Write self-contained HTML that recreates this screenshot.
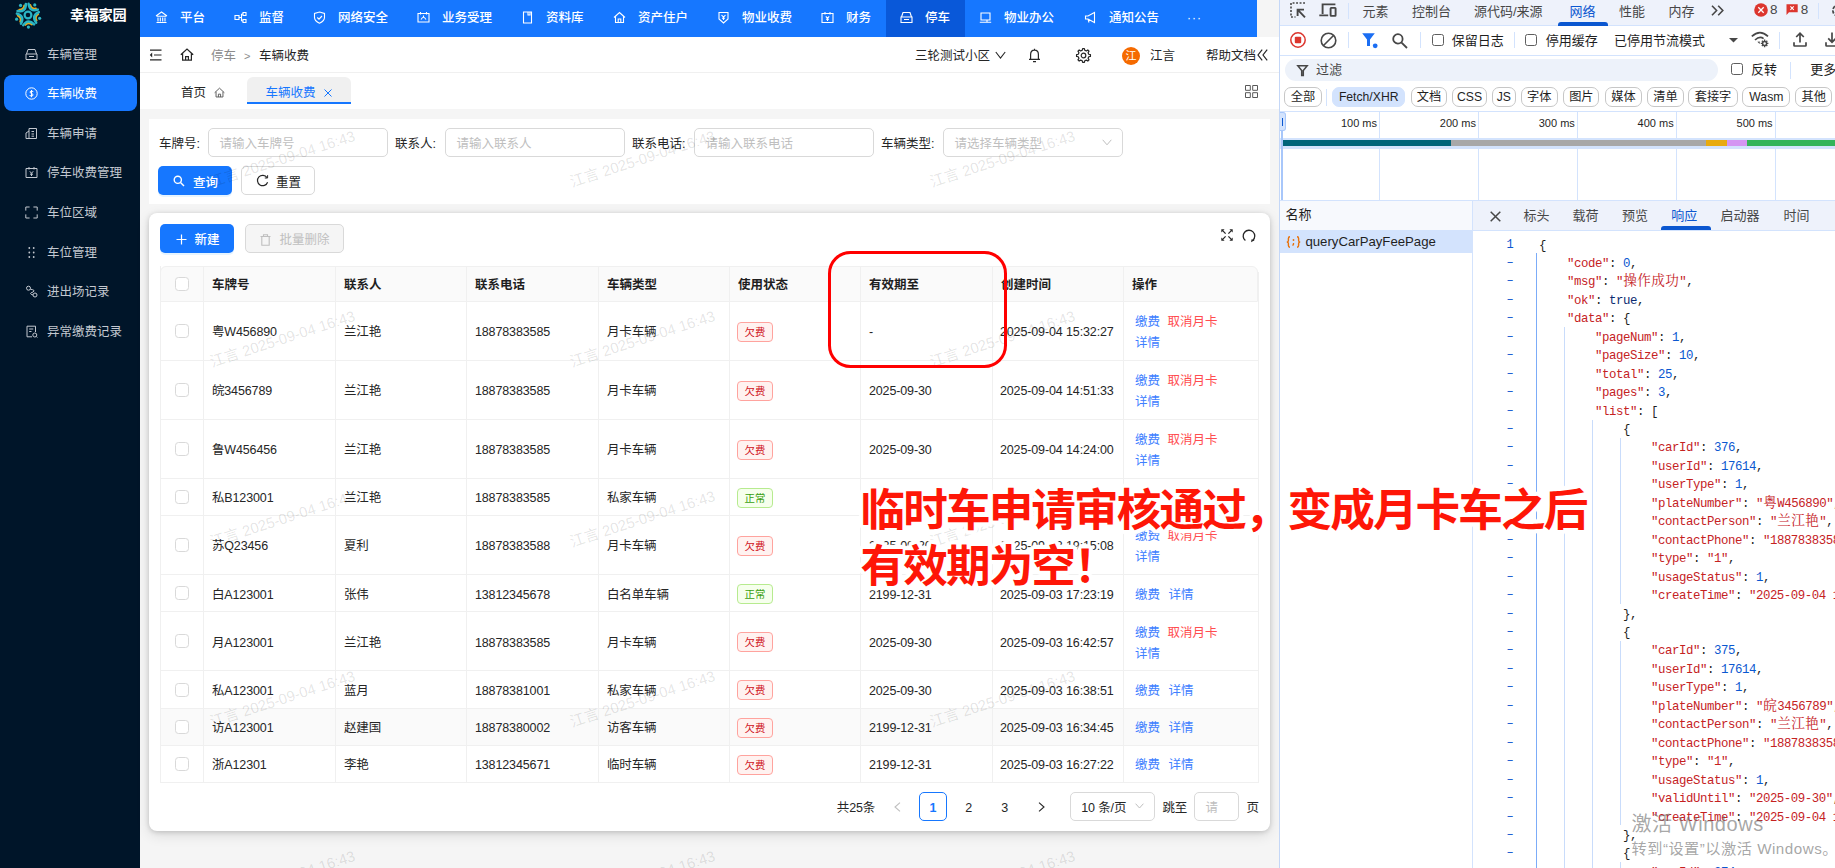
<!DOCTYPE html>
<html lang="zh-CN"><head><meta charset="utf-8"><title>车辆收费</title>
<style>
*{box-sizing:border-box;margin:0;padding:0}
html,body{width:1835px;height:868px;overflow:hidden;background:#fff}
body{font-family:"Liberation Sans","Noto Sans CJK SC",sans-serif;font-size:12.5px;color:#262626;position:relative}
.abs{position:absolute}
.t{position:absolute;white-space:nowrap;line-height:1}
svg{display:block;position:absolute;overflow:visible}
#side{position:absolute;left:0;top:0;width:140px;height:868px;background:#001529}
#side .mi{position:absolute;left:47px;color:#d4d9df;font-size:12.5px;line-height:16px;height:16px;white-space:nowrap}
#side .act{position:absolute;left:4px;top:75px;width:133px;height:36px;border-radius:8px;background:#1677ff}
#topnav{position:absolute;left:140px;top:0;width:1117px;height:37px;background:#1677ff}
#topnav .n{position:absolute;top:0;height:37px;line-height:36px;color:#fff;font-size:12.5px;font-weight:500;white-space:nowrap}
#topgap{position:absolute;left:1257px;top:0;width:23px;height:37px;background:#f5f5f5}
#hdr{position:absolute;left:140px;top:37px;width:1140px;height:35.6px;background:#fff}
#tabs{position:absolute;left:140px;top:72px;width:1140px;height:37px;background:#fff}
#content{position:absolute;left:140px;top:109px;width:1140px;height:759px;background:#f5f5f5}

.card{position:absolute;background:#fff}
.lbl{position:absolute;line-height:16px;top:136px;color:#262626;white-space:nowrap}
.inp{position:absolute;top:128px;height:28.5px;width:179.5px;border:1px solid #d9d9d9;border-radius:5px;background:#fff;color:#bfbfbf;line-height:31.5px;padding-left:10.5px;white-space:nowrap}
.btn{position:absolute;height:29px;border-radius:5px;line-height:28px;white-space:nowrap}
.tbl{position:absolute;left:160px;top:266.5px;width:1098px;border:1px solid #f0f0f0;border-radius:6px 6px 0 0}
.row{position:absolute;left:160.5px;width:1097.5px;border-bottom:1px solid #f0f0f0}
.vl{position:absolute;top:266px;width:1px;background:#f0f0f0}
.c{position:absolute;white-space:nowrap;line-height:16px;color:#262626;letter-spacing:-0.12px}
.th{position:absolute;white-space:nowrap;line-height:16px;color:#1f1f1f;font-weight:700;top:277px}
.cb{position:absolute;left:175px;width:14px;height:14px;border:1px solid #d9d9d9;border-radius:3.5px;background:#fff}
.tag{position:absolute;left:737px;height:20px;width:36px;border-radius:4px;font-size:10.4px;line-height:19.6px;text-align:center}
.tag.r{background:#fff2f0;border:1px solid #ffa39e;color:#cf1322}
.tag.g{background:#f6ffed;border:1px solid #b7eb8f;color:#389e0d}
.lk{position:absolute;white-space:nowrap;line-height:16px;color:#4080ff}
.lk.d{color:#ff4d4f}
.wm{position:absolute;white-space:nowrap;font-size:14.9px;line-height:16px;color:rgba(0,0,0,.115);transform:rotate(-18deg);transform-origin:0 100%}

#dt{position:absolute;left:1280px;top:0;width:555px;height:868px;background:#fff;overflow:hidden;font-size:13px;color:#1f1f1f}
#dt .t{font-size:13px;line-height:16px}
#dt .tab{color:#474747}
.pill{position:absolute;top:87px;height:20px;border:1px solid #c7c7c7;border-radius:7px;line-height:18px;text-align:center;font-size:12.2px;white-space:nowrap;color:#1f1f1f}
.hl{position:absolute;left:0;width:555px;height:1px;background:#d3e3fd}
.gl{position:absolute;top:111px;width:1px;height:89px;background:#d3e3fd}
.ms{position:absolute;top:116px;font-size:11px;line-height:14px;white-space:nowrap;text-align:right;width:60px;color:#1f1f1f}
.sep{position:absolute;width:1px;background:#d3e3fd}
.ck{position:absolute;width:12px;height:12px;border:1.3px solid #5e5e5e;border-radius:2.5px;background:#fff}
.code{position:absolute;left:259px;white-space:pre;font-family:"Liberation Mono","Noto Serif CJK SC",monospace;font-size:12.4px;letter-spacing:-0.44px;line-height:18px;height:18px;color:#1f1f1f}
.code b{font-weight:400;color:#c5221f}
.code i{font-style:normal;color:#0b57d0}
.code u{text-decoration:none;color:#0b2a70}
.code s{text-decoration:none;font-size:13.6px;letter-spacing:0.4px;line-height:14px;margin-left:.4px}
.ln{position:absolute;left:226px;width:8px;text-align:center;font-family:"Liberation Mono",monospace;font-size:12px;line-height:18px;height:18px;color:#0b57d0}
.ig{position:absolute;width:1px;background:#7cacf8}
</style></head><body>
<div id="side">
<svg style="left:14.5px;top:1.8px" width="26" height="26" viewBox="-13 -13 26 26"><circle cx="0" cy="0" r="3.4" fill="none" stroke="#2ab5c4" stroke-width="2.2"/><g fill="none" stroke-linecap="round"><path d="M3.99 9.39 Q0.46 6.58 -2.64 9.85" stroke="#e8a91c" stroke-width="2"/><path d="M-7.70 6.69 Q-6.12 2.47 -10.19 0.53" stroke="#e8a91c" stroke-width="2"/><path d="M-8.74 -5.25 Q-4.24 -5.06 -3.66 -9.52" stroke="#e8a91c" stroke-width="2"/><path d="M2.29 -9.94 Q3.50 -5.60 7.93 -6.42" stroke="#e8a91c" stroke-width="2"/><path d="M10.16 -0.89 Q6.40 1.60 8.55 5.56" stroke="#e8a91c" stroke-width="2"/><path d="M6.10 9.39 Q0.22 3.19 -4.73 10.15" stroke="#2ab5c4" stroke-width="2.5"/><path d="M-7.05 8.70 Q-2.97 1.20 -11.12 -1.36" stroke="#2ab5c4" stroke-width="2.5"/><path d="M-10.46 -4.01 Q-2.06 -2.45 -2.14 -10.99" stroke="#2ab5c4" stroke-width="2.5"/><path d="M0.59 -11.18 Q1.70 -2.71 9.80 -5.43" stroke="#2ab5c4" stroke-width="2.5"/><path d="M10.82 -2.90 Q3.10 0.77 8.19 7.64" stroke="#2ab5c4" stroke-width="2.5"/></g><circle cx="0.42" cy="12.09" r="1.6" fill="#2ab5c4"/><circle cx="-11.37" cy="4.14" r="1.6" fill="#2ab5c4"/><circle cx="-7.45" cy="-9.53" r="1.6" fill="#2ab5c4"/><circle cx="6.77" cy="-10.03" r="1.6" fill="#2ab5c4"/><circle cx="11.63" cy="3.34" r="1.6" fill="#2ab5c4"/></svg>
<div class="t" style="left:70px;top:7px;font-size:14.2px;font-weight:700;color:#fff;line-height:16px">幸福家园</div>
<div class="act"></div>
<svg style="left:25px;top:47.5px" width="13" height="13" viewBox="0 0 13 13" fill="none" stroke="#c3c8d0" stroke-width="1"><path d="M1.5 6 L3 1.5 H10 L11.5 6 M1 6 H12 V11.5 H1 Z M4 8.5 H9" /></svg>
<div class="mi" style="top:47px;color:#c3c8d0">车辆管理</div>
<svg style="left:25px;top:86.5px" width="13" height="13" viewBox="0 0 13 13" fill="none" stroke="#fff" stroke-width="1"><circle cx="6.5" cy="6.5" r="5.7"/><path d="M8.3 4.6 Q6.5 3.6 5.2 4.6 Q4.4 5.8 6.5 6.4 Q8.8 7.2 7.8 8.6 Q6.4 9.5 4.6 8.5 M6.5 3 V10.2" stroke-width="1"/></svg>
<div class="mi" style="top:86px;color:#fff">车辆收费</div>
<svg style="left:25px;top:126.5px" width="13" height="13" viewBox="0 0 13 13" fill="none" stroke="#c3c8d0" stroke-width="1"><path d="M4 1.5 H11.5 V11.5 H1 V6 L4 4 Z M4 4 V11.5 M6.5 4.5 H9 M6.5 7 H9 M6.5 9.2 H9"/></svg>
<div class="mi" style="top:126px;color:#c3c8d0">车辆申请</div>
<svg style="left:25px;top:165.5px" width="13" height="13" viewBox="0 0 13 13" fill="none" stroke="#c3c8d0" stroke-width="1"><path d="M1 2.5 H12 V11.5 H1 Z M4 1 V3.5 M9 1 V3.5 M4.8 5.3 L6.5 7.3 L8.2 5.3 M6.5 7.3 V10 M5 8.2 H8"/></svg>
<div class="mi" style="top:165px;color:#c3c8d0">停车收费管理</div>
<svg style="left:25px;top:205.5px" width="13" height="13" viewBox="0 0 13 13" fill="none" stroke="#c3c8d0" stroke-width="1"><path d="M0.8 4.6 V1 H4.6 M8.4 1 H12.2 V4.6 M12.2 8.4 V12 H8.4 M4.6 12 H0.8 V8.4"/></svg>
<div class="mi" style="top:205px;color:#c3c8d0">车位区域</div>
<svg style="left:25px;top:245.5px" width="13" height="13" viewBox="0 0 13 13" fill="none" stroke="#c3c8d0" stroke-width="1"><g fill="#c3c8d0" stroke="none"><circle cx="4.3" cy="2" r=".9"/><circle cx="8.7" cy="2" r=".9"/><circle cx="4.3" cy="6.5" r=".9"/><circle cx="8.7" cy="6.5" r=".9"/><circle cx="4.3" cy="11" r=".9"/><circle cx="8.7" cy="11" r=".9"/></g></svg>
<div class="mi" style="top:245px;color:#c3c8d0">车位管理</div>
<svg style="left:25px;top:284.5px" width="13" height="13" viewBox="0 0 13 13" fill="none" stroke="#c3c8d0" stroke-width="1"><circle cx="3.5" cy="3.2" r="2"/><circle cx="10" cy="10" r="2"/><path d="M5.3 4.2 Q11 5 8 7 Q3 8.5 8 10"/></svg>
<div class="mi" style="top:284px;color:#c3c8d0">进出场记录</div>
<svg style="left:25px;top:324.5px" width="13" height="13" viewBox="0 0 13 13" fill="none" stroke="#c3c8d0" stroke-width="1"><path d="M2 1.2 H10.5 V7 M2 1.2 V11.8 H7 M4.2 4 H8.3 M4.2 6.5 H6.5"/><circle cx="9.8" cy="10" r="2"/><path d="M11.2 11.4 L12.3 12.5"/></svg>
<div class="mi" style="top:324px;color:#c3c8d0">异常缴费记录</div>
</div>
<div id="topnav">
<div class="abs" style="left:746px;top:0;width:79px;height:37px;background:#0958d9"></div>
<svg style="left:14.5px;top:11px" width="13" height="13" viewBox="0 0 13 13" fill="none" stroke="#fff" stroke-width="1.1"><path d="M1 5 L6.5 1 L12 5 M2 5.2 H11 M3 6.5 V10.5 M5.3 6.5 V10.5 M7.7 6.5 V10.5 M10 6.5 V10.5 M1.5 11.5 H11.5"/></svg>
<div class="n" style="left:40px">平台</div>
<svg style="left:93.5px;top:11px" width="13" height="13" viewBox="0 0 13 13" fill="none" stroke="#fff" stroke-width="1.1"><path d="M1 4.5 H5 V8.5 H1 Z M5 6.5 H7.5 M7.5 3 V10 M7.5 3 H9 M7.5 10 H9 M9 1.5 H12 V4.5 H9 Z M9 8.5 H12 V11.5 H9 Z"/></svg>
<div class="n" style="left:119px">监督</div>
<svg style="left:172.5px;top:11px" width="13" height="13" viewBox="0 0 13 13" fill="none" stroke="#fff" stroke-width="1.1"><path d="M6.5 1 L11.5 2.5 V6.5 Q11.5 10 6.5 12.2 Q1.5 10 1.5 6.5 V2.5 Z M4.3 6.5 L6 8.2 L9 5"/></svg>
<div class="n" style="left:198px">网络安全</div>
<svg style="left:276.5px;top:11px" width="13" height="13" viewBox="0 0 13 13" fill="none" stroke="#fff" stroke-width="1.1"><path d="M1 2.5 H12 V11 H1 Z M3.5 1 V3.5 M9.5 1 V3.5 M4 8.5 Q6.5 4 9 8.5 M6.5 4.5 V6"/></svg>
<div class="n" style="left:302px">业务受理</div>
<svg style="left:380.5px;top:11px" width="13" height="13" viewBox="0 0 13 13" fill="none" stroke="#fff" stroke-width="1.1"><path d="M2.5 1 H10.5 V12 H2.5 Z M7 1 V4 H9 V1"/></svg>
<div class="n" style="left:406px">资料库</div>
<svg style="left:472.5px;top:11px" width="13" height="13" viewBox="0 0 13 13" fill="none" stroke="#fff" stroke-width="1.1"><path d="M1 6.5 L6.5 1.5 L12 6.5 M2.5 5.5 V11.5 H10.5 V5.5 M5.2 11.5 V8 H7.8 V11.5"/></svg>
<div class="n" style="left:498px">资产住户</div>
<svg style="left:576.5px;top:11px" width="13" height="13" viewBox="0 0 13 13" fill="none" stroke="#fff" stroke-width="1.1"><path d="M2 1.5 H11 V8 L6.5 12 L2 8 Z M4.5 4 L6.5 6.2 L8.5 4 M6.5 6.2 V9 M5 7.3 H8"/></svg>
<div class="n" style="left:602px">物业收费</div>
<svg style="left:680.5px;top:11px" width="13" height="13" viewBox="0 0 13 13" fill="none" stroke="#fff" stroke-width="1.1"><path d="M1 2.5 H12 V11.5 H1 Z M4 1 V3.5 M9 1 V3.5 M4.8 5.3 L6.5 7.3 L8.2 5.3 M6.5 7.3 V10 M5 8.2 H8"/></svg>
<div class="n" style="left:706px">财务</div>
<svg style="left:759.5px;top:11px" width="13" height="13" viewBox="0 0 13 13" fill="none" stroke="#fff" stroke-width="1.1"><path d="M1.5 6 L3 1.5 H10 L11.5 6 M1 6 H12 V11.5 H1 Z M4 8.5 H9"/></svg>
<div class="n" style="left:785px">停车</div>
<svg style="left:838.5px;top:11px" width="13" height="13" viewBox="0 0 13 13" fill="none" stroke="#fff" stroke-width="1.1"><path d="M2 2 H11 V9 H2 Z M0.8 11.3 H12.2 M8 9 V11"/></svg>
<div class="n" style="left:864px">物业办公</div>
<svg style="left:943.5px;top:11px" width="13" height="13" viewBox="0 0 13 13" fill="none" stroke="#fff" stroke-width="1.1"><path d="M1.5 5 H4 L10.5 1.5 V11.5 L4 8 H1.5 Z M4 8 L5 11.5"/></svg>
<div class="n" style="left:969px">通知公告</div>
<div class="n" style="left:1047px;letter-spacing:1px;font-size:12px">···</div>
</div><div id="topgap"></div>
<div id="hdr">
<svg style="left:9px;top:12px" width="13" height="12" viewBox="0 0 13 12" fill="none" stroke="#262626" stroke-width="1.2"><path d="M1 1.2 H12.5 M5 6 H12.5 M1 10.8 H12.5"/><path d="M3.2 3.6 L0.8 6 L3.2 8.4 Z" fill="#262626" stroke="none"/></svg>
<svg style="left:39.5px;top:11px" width="14" height="13" viewBox="0 0 14 13" fill="none" stroke="#262626" stroke-width="1.2"><path d="M0.8 6.8 L7 1 L13.2 6.8 M2.6 5.6 V12.2 H11.4 V5.6 M5.6 12.2 V8.6 H8.4 V12.2"/></svg>
<div class="t" style="left:71px;top:11.2px;line-height:16px;color:#8c8c8c">停车</div>
<div class="t" style="left:104px;top:11.2px;line-height:16px;color:#8c8c8c;font-size:11px">&gt;</div>
<div class="t" style="left:119px;top:11.2px;line-height:16px;color:#262626">车辆收费</div>
<div class="t" style="left:775px;top:11.2px;line-height:16px;color:#262626">三轮测试小区</div>
<svg style="left:855px;top:14px" width="11" height="8" viewBox="0 0 11 8" fill="none" stroke="#262626" stroke-width="1.1"><path d="M0.8 1 L5.5 7 L10.2 1"/></svg>
<svg style="left:887.6px;top:10.6px" width="13" height="15" viewBox="0 0 13 15" fill="none" stroke="#262626" stroke-width="1.2"><path d="M1 11.4 H12 M2.6 11.4 V6.4 Q2.6 2.2 6.5 2.2 Q10.4 2.2 10.4 6.4 V11.4 M6.5 2.2 V0.8 M5 13.6 H8"/></svg>
<svg style="left:935.6px;top:10.8px" width="15" height="15" viewBox="0 0 15 15" fill="none" stroke="#262626" stroke-width="1.2" stroke-linejoin="round"><circle cx="7.5" cy="7.5" r="2.3"/><path d="M12.75 6.24 L14.44 6.62 L14.44 8.38 L12.75 8.76 L12.10 10.32 L13.03 11.79 L11.79 13.03 L10.32 12.10 L8.76 12.75 L8.38 14.44 L6.62 14.44 L6.24 12.75 L4.68 12.10 L3.21 13.03 L1.97 11.79 L2.90 10.32 L2.25 8.76 L0.56 8.38 L0.56 6.62 L2.25 6.24 L2.90 4.68 L1.97 3.21 L3.21 1.97 L4.68 2.90 L6.24 2.25 L6.62 0.56 L8.38 0.56 L8.76 2.25 L10.32 2.90 L11.79 1.97 L13.03 3.21 L12.10 4.68 Z"/></svg>
<div class="abs" style="left:982px;top:9.5px;width:18px;height:18px;border-radius:9px;background:#f56a00"></div>
<div class="t" style="left:985.5px;top:13px;font-size:11px;line-height:12px;color:#fff">江</div>
<div class="t" style="left:1010px;top:11.2px;line-height:16px;color:#262626">江言</div>
<div class="t" style="left:1066px;top:11.2px;line-height:16px;color:#262626">帮助文档</div>
<svg style="left:1116.5px;top:12.2px" width="11" height="12" viewBox="0 0 11 12" fill="none" stroke="#262626" stroke-width="1.2"><path d="M5.2 0.6 L1 6 L5.2 11.4 M10.2 0.6 L6 6 L10.2 11.4"/></svg>
</div>
<div id="tabs">
<div class="abs" style="left:0;top:0;width:1140px;height:1px;background:#f0f0f0"></div>
<div class="t" style="left:41px;top:13px;line-height:16px;color:#262626">首页</div>
<svg style="left:73.5px;top:15px" width="11" height="11" viewBox="0 0 14 13" fill="none" stroke="#595959" stroke-width="1.2"><path d="M0.8 6.8 L7 1 L13.2 6.8 M2.6 5.6 V12.2 H11.4 V5.6 M5.6 12.2 V8.6 H8.4 V12.2"/></svg>
<div class="abs" style="left:106.5px;top:5px;width:104px;height:26.5px;background:#f0f0f0;border-radius:6px 6px 0 0;border-bottom:2px solid #1677ff"></div>
<div class="t" style="left:125.5px;top:13px;line-height:16px;color:#1677ff">车辆收费</div>
<svg style="left:184px;top:17px" width="8" height="8" viewBox="0 0 8 8" fill="none" stroke="#1677ff" stroke-width="1"><path d="M0.5 0.5 L7.5 7.5 M7.5 0.5 L0.5 7.5"/></svg>
<svg style="left:1105px;top:13px" width="13" height="13" viewBox="0 0 13 13" fill="none" stroke="#595959" stroke-width="1"><path d="M0.5 0.5 H5.3 V5.3 H0.5 Z M7.7 0.5 H12.5 V5.3 H7.7 Z M0.5 7.7 H5.3 V12.5 H0.5 Z M7.7 7.7 H12.5 V12.5 H7.7 Z"/></svg>
</div>
<div id="content"></div>
<div id="app" style="position:absolute;left:0;top:0;width:1280px;height:868px;overflow:hidden">
<div class="card" style="left:148.5px;top:118.5px;width:1121px;height:85.5px"></div>
<div class="lbl" style="left:159px">车牌号:</div>
<div class="inp" style="left:208px">请输入车牌号</div>
<div class="lbl" style="left:395px">联系人:</div>
<div class="inp" style="left:445px">请输入联系人</div>
<div class="lbl" style="left:632px">联系电话:</div>
<div class="inp" style="left:694px">请输入联系电话</div>
<div class="lbl" style="left:881px">车辆类型:</div>
<div class="inp" style="left:943px">请选择车辆类型</div>
<svg style="left:1102px;top:139px" width="10" height="7" viewBox="0 0 10 7" fill="none" stroke="#bfbfbf" stroke-width="1"><path d="M0.7 0.8 L5 5.8 L9.3 0.8"/></svg>
<div class="btn" style="left:158px;top:165.5px;width:74px;background:#1677ff;color:#fff;box-shadow:0 2px 0 rgba(5,145,255,.1)"></div>
<svg style="left:173px;top:174.5px" width="12" height="12" viewBox="0 0 12 12" fill="none" stroke="#fff" stroke-width="1.4"><circle cx="4.8" cy="4.8" r="3.6"/><path d="M7.5 7.5 L11 11"/></svg>
<div class="t" style="left:193px;top:174.6px;line-height:16px;color:#fff;font-weight:500">查询</div>
<div class="btn" style="left:241px;top:165.5px;width:74px;background:#fff;border:1px solid #d9d9d9"></div>
<svg style="left:256px;top:174px" width="13" height="13" viewBox="0 0 13 13" fill="none" stroke="#262626" stroke-width="1.2"><path d="M11 3.6 A5.2 5.2 0 1 0 11.6 8.2"/><path d="M11.6 1.2 V4 H8.8" stroke-width="1" /></svg>
<div class="t" style="left:276px;top:174.6px;line-height:16px;color:#262626">重置</div>
<div class="card" style="left:149px;top:213px;width:1121px;height:617.5px;border-radius:8px;box-shadow:0 1px 5px rgba(0,0,0,.17), 0 4px 14px rgba(0,0,0,.11)"></div>
<div class="btn" style="left:160px;top:224px;width:73.5px;background:#1677ff;box-shadow:0 2px 0 rgba(5,145,255,.1)"></div>
<svg style="left:176px;top:234px" width="11" height="11" viewBox="0 0 11 11" fill="none" stroke="#fff" stroke-width="1.2"><path d="M5.5 0.5 V10.5 M0.5 5.5 H10.5"/></svg>
<div class="t" style="left:194.5px;top:231.5px;line-height:16px;color:#fff;font-weight:500">新建</div>
<div class="btn" style="left:245px;top:224px;width:98.5px;background:#f5f5f5;border:1px solid #d9d9d9"></div>
<svg style="left:260px;top:233.5px" width="11" height="12" viewBox="0 0 11 12" fill="none" stroke="#bfbfbf" stroke-width="1.1"><path d="M0.5 2.5 H10.5 M3.5 2.3 V0.8 H7.5 V2.3 M1.8 2.6 V11.2 H9.2 V2.6"/></svg>
<div class="t" style="left:279.5px;top:231.5px;line-height:16px;color:#bfbfbf">批量删除</div>
<svg style="left:1221px;top:229px" width="12" height="12" viewBox="0 0 12 12" fill="none" stroke="#262626" stroke-width="1.3"><path d="M1.4 1.4 L4.6 4.6 M10.6 1.4 L7.4 4.6 M1.4 10.6 L4.6 7.4 M10.6 10.6 L7.4 7.4"/><path d="M0.3 0.3 H3.6 L0.3 3.6 Z M11.7 0.3 H8.4 L11.7 3.6 Z M0.3 11.7 H3.6 L0.3 8.4 Z M11.7 11.7 H8.4 L11.7 8.4 Z" fill="#262626" stroke="none"/></svg>
<svg style="left:1241.5px;top:228.6px" width="14" height="14" viewBox="0 0 14 14" fill="none" stroke="#262626" stroke-width="1.3"><path d="M3.4 11.6 A5.8 5.8 0 1 1 10.9 11.3"/><path d="M9 13.2 L9.6 10.2 L12.6 11.2 Z" fill="#262626" stroke="none"/></svg>
<div class="abs" style="left:160px;top:266px;width:1098px;height:35.5px;background:#fafafa;border:1px solid #f0f0f0;border-radius:6px 6px 0 0"></div>
<div class="abs" style="left:161px;top:708px;width:1097px;height:37.5px;background:#fafafa"></div>
<div class="abs" style="left:160px;top:359.5px;width:1098px;height:1px;background:#f0f0f0"></div>
<div class="abs" style="left:160px;top:418.5px;width:1098px;height:1px;background:#f0f0f0"></div>
<div class="abs" style="left:160px;top:477.5px;width:1098px;height:1px;background:#f0f0f0"></div>
<div class="abs" style="left:160px;top:515.0px;width:1098px;height:1px;background:#f0f0f0"></div>
<div class="abs" style="left:160px;top:573.5px;width:1098px;height:1px;background:#f0f0f0"></div>
<div class="abs" style="left:160px;top:611.0px;width:1098px;height:1px;background:#f0f0f0"></div>
<div class="abs" style="left:160px;top:670.0px;width:1098px;height:1px;background:#f0f0f0"></div>
<div class="abs" style="left:160px;top:707.5px;width:1098px;height:1px;background:#f0f0f0"></div>
<div class="abs" style="left:160px;top:745.0px;width:1098px;height:1px;background:#f0f0f0"></div>
<div class="abs" style="left:160px;top:782.0px;width:1098px;height:1px;background:#f0f0f0"></div>
<div class="abs" style="left:160px;top:266px;width:1px;height:516.5px;background:#f0f0f0"></div>
<div class="abs" style="left:1257.5px;top:272px;width:1px;height:510.5px;background:#f0f0f0"></div>
<div class="vl" style="left:203.0px;height:516px"></div>
<div class="vl" style="left:335.0px;height:516px"></div>
<div class="vl" style="left:466.0px;height:516px"></div>
<div class="vl" style="left:598.0px;height:516px"></div>
<div class="vl" style="left:729.0px;height:516px"></div>
<div class="vl" style="left:860.0px;height:516px"></div>
<div class="vl" style="left:992.0px;height:516px"></div>
<div class="vl" style="left:1123.0px;height:516px"></div>
<div class="th" style="left:211.9px">车牌号</div>
<div class="th" style="left:343.9px">联系人</div>
<div class="th" style="left:474.9px">联系电话</div>
<div class="th" style="left:606.9px">车辆类型</div>
<div class="th" style="left:737.9px">使用状态</div>
<div class="th" style="left:868.9px">有效期至</div>
<div class="th" style="left:1000.9px">创建时间</div>
<div class="th" style="left:1131.9px">操作</div>
<div class="cb" style="top:277px"></div>
<div class="cb" style="top:324.05px"></div>
<div class="c" style="left:211.9px;top:324.15px">粤W456890</div>
<div class="c" style="left:343.9px;top:324.15px">兰江艳</div>
<div class="c" style="left:474.9px;top:324.15px">18878383585</div>
<div class="c" style="left:606.9px;top:324.15px">月卡车辆</div>
<div class="tag r" style="top:321.75px">欠费</div>
<div class="c" style="left:868.9px;top:324.15px">-</div>
<div class="c" style="left:999.9px;top:324.15px">2025-09-04 15:32:27</div>
<div class="lk" style="left:1135px;top:314.35px">缴费</div>
<div class="lk d" style="left:1167.5px;top:314.35px">取消月卡</div>
<div class="lk" style="left:1135px;top:335.35px">详情</div>
<div class="cb" style="top:382.8px"></div>
<div class="c" style="left:211.9px;top:382.9px">皖3456789</div>
<div class="c" style="left:343.9px;top:382.9px">兰江艳</div>
<div class="c" style="left:474.9px;top:382.9px">18878383585</div>
<div class="c" style="left:606.9px;top:382.9px">月卡车辆</div>
<div class="tag r" style="top:380.5px">欠费</div>
<div class="c" style="left:868.9px;top:382.9px">2025-09-30</div>
<div class="c" style="left:999.9px;top:382.9px">2025-09-04 14:51:33</div>
<div class="lk" style="left:1135px;top:373.1px">缴费</div>
<div class="lk d" style="left:1167.5px;top:373.1px">取消月卡</div>
<div class="lk" style="left:1135px;top:394.1px">详情</div>
<div class="cb" style="top:441.8px"></div>
<div class="c" style="left:211.9px;top:441.9px">鲁W456456</div>
<div class="c" style="left:343.9px;top:441.9px">兰江艳</div>
<div class="c" style="left:474.9px;top:441.9px">18878383585</div>
<div class="c" style="left:606.9px;top:441.9px">月卡车辆</div>
<div class="tag r" style="top:439.5px">欠费</div>
<div class="c" style="left:868.9px;top:441.9px">2025-09-30</div>
<div class="c" style="left:999.9px;top:441.9px">2025-09-04 14:24:00</div>
<div class="lk" style="left:1135px;top:432.1px">缴费</div>
<div class="lk d" style="left:1167.5px;top:432.1px">取消月卡</div>
<div class="lk" style="left:1135px;top:453.1px">详情</div>
<div class="cb" style="top:490.05px"></div>
<div class="c" style="left:211.9px;top:490.15px">私B123001</div>
<div class="c" style="left:343.9px;top:490.15px">兰江艳</div>
<div class="c" style="left:474.9px;top:490.15px">18878383585</div>
<div class="c" style="left:606.9px;top:490.15px">私家车辆</div>
<div class="tag g" style="top:487.75px">正常</div>
<div class="c" style="left:868.9px;top:490.15px">2025-09-30</div>
<div class="c" style="left:999.9px;top:490.15px">2025-09-04 11:08:12</div>
<div class="lk" style="left:1135px;top:490.15px">缴费</div>
<div class="lk" style="left:1168.5px;top:490.15px">详情</div>
<div class="cb" style="top:538.05px"></div>
<div class="c" style="left:211.9px;top:538.15px">苏Q23456</div>
<div class="c" style="left:343.9px;top:538.15px">夏利</div>
<div class="c" style="left:474.9px;top:538.15px">18878383588</div>
<div class="c" style="left:606.9px;top:538.15px">月卡车辆</div>
<div class="tag r" style="top:535.75px">欠费</div>
<div class="c" style="left:868.9px;top:538.15px">2025-09-30</div>
<div class="c" style="left:999.9px;top:538.15px">2025-09-03 19:15:08</div>
<div class="lk" style="left:1135px;top:528.35px">缴费</div>
<div class="lk d" style="left:1167.5px;top:528.35px">取消月卡</div>
<div class="lk" style="left:1135px;top:549.35px">详情</div>
<div class="cb" style="top:586.05px"></div>
<div class="c" style="left:211.9px;top:586.9499999999999px">白A123001</div>
<div class="c" style="left:343.9px;top:586.9499999999999px">张伟</div>
<div class="c" style="left:474.9px;top:586.9499999999999px">13812345678</div>
<div class="c" style="left:606.9px;top:586.9499999999999px">白名单车辆</div>
<div class="tag g" style="top:583.75px">正常</div>
<div class="c" style="left:868.9px;top:586.9499999999999px">2199-12-31</div>
<div class="c" style="left:999.9px;top:586.9499999999999px">2025-09-03 17:23:19</div>
<div class="lk" style="left:1135px;top:586.9499999999999px">缴费</div>
<div class="lk" style="left:1168.5px;top:586.9499999999999px">详情</div>
<div class="cb" style="top:634.3px"></div>
<div class="c" style="left:211.9px;top:635.1999999999999px">月A123001</div>
<div class="c" style="left:343.9px;top:635.1999999999999px">兰江艳</div>
<div class="c" style="left:474.9px;top:635.1999999999999px">18878383585</div>
<div class="c" style="left:606.9px;top:635.1999999999999px">月卡车辆</div>
<div class="tag r" style="top:632.0px">欠费</div>
<div class="c" style="left:868.9px;top:635.1999999999999px">2025-09-30</div>
<div class="c" style="left:999.9px;top:635.1999999999999px">2025-09-03 16:42:57</div>
<div class="lk" style="left:1135px;top:624.6px">缴费</div>
<div class="lk d" style="left:1167.5px;top:624.6px">取消月卡</div>
<div class="lk" style="left:1135px;top:645.6px">详情</div>
<div class="cb" style="top:682.55px"></div>
<div class="c" style="left:211.9px;top:682.65px">私A123001</div>
<div class="c" style="left:343.9px;top:682.65px">蓝月</div>
<div class="c" style="left:474.9px;top:682.65px">18878381001</div>
<div class="c" style="left:606.9px;top:682.65px">私家车辆</div>
<div class="tag r" style="top:680.25px">欠费</div>
<div class="c" style="left:868.9px;top:682.65px">2025-09-30</div>
<div class="c" style="left:999.9px;top:682.65px">2025-09-03 16:38:51</div>
<div class="lk" style="left:1135px;top:682.65px">缴费</div>
<div class="lk" style="left:1168.5px;top:682.65px">详情</div>
<div class="cb" style="top:720.05px"></div>
<div class="c" style="left:211.9px;top:720.15px">访A123001</div>
<div class="c" style="left:343.9px;top:720.15px">赵建国</div>
<div class="c" style="left:474.9px;top:720.15px">18878380002</div>
<div class="c" style="left:606.9px;top:720.15px">访客车辆</div>
<div class="tag r" style="top:717.75px">欠费</div>
<div class="c" style="left:868.9px;top:720.15px">2199-12-31</div>
<div class="c" style="left:999.9px;top:720.15px">2025-09-03 16:34:45</div>
<div class="lk" style="left:1135px;top:720.15px">缴费</div>
<div class="lk" style="left:1168.5px;top:720.15px">详情</div>
<div class="cb" style="top:757.3px"></div>
<div class="c" style="left:211.9px;top:757.4px">浙A12301</div>
<div class="c" style="left:343.9px;top:757.4px">李艳</div>
<div class="c" style="left:474.9px;top:757.4px">13812345671</div>
<div class="c" style="left:606.9px;top:757.4px">临时车辆</div>
<div class="tag r" style="top:755.0px">欠费</div>
<div class="c" style="left:868.9px;top:757.4px">2199-12-31</div>
<div class="c" style="left:999.9px;top:757.4px">2025-09-03 16:27:22</div>
<div class="lk" style="left:1135px;top:757.4px">缴费</div>
<div class="lk" style="left:1168.5px;top:757.4px">详情</div>
<div class="c" style="left:836.8px;top:799.8px">共25条</div>
<svg style="left:894px;top:801.5px" width="7" height="10" viewBox="0 0 7 10" fill="none" stroke="#bfbfbf" stroke-width="1.1"><path d="M6 0.7 L1 5 L6 9.3"/></svg>
<div class="abs" style="left:919.3px;top:792px;width:27.5px;height:28.5px;border:1px solid #1677ff;border-radius:5px;background:#fff"></div>
<div class="c" style="left:929.6px;top:799.8px;color:#1677ff;font-weight:600">1</div>
<div class="c" style="left:965.2px;top:799.8px">2</div>
<div class="c" style="left:1001.3px;top:799.8px">3</div>
<svg style="left:1038px;top:801.5px" width="7" height="10" viewBox="0 0 7 10" fill="none" stroke="#262626" stroke-width="1.1"><path d="M1 0.7 L6 5 L1 9.3"/></svg>
<div class="abs" style="left:1070.2px;top:792px;width:84.5px;height:28.5px;border:1px solid #d9d9d9;border-radius:5px;background:#fff"></div>
<div class="c" style="left:1081.2px;top:799.8px">10 条/页</div>
<svg style="left:1135px;top:803px" width="9" height="6" viewBox="0 0 9 6" fill="none" stroke="#bfbfbf" stroke-width="1"><path d="M0.6 0.7 L4.5 5 L8.4 0.7"/></svg>
<div class="c" style="left:1162.4px;top:799.8px">跳至</div>
<div class="abs" style="left:1194.3px;top:792px;width:44.5px;height:28.5px;border:1px solid #d9d9d9;border-radius:5px;background:#fff"></div>
<div class="c" style="left:1205.5px;top:799.8px;color:#bfbfbf">请</div>
<div class="c" style="left:1246.5px;top:799.8px">页</div>
<div class="abs" style="left:140px;top:109px;width:1140px;height:759px;overflow:hidden">
<div class="wm" style="left:73px;top:64.80000000000001px">江言 2025-09-04 16:43</div>
<div class="wm" style="left:433px;top:64.80000000000001px">江言 2025-09-04 16:43</div>
<div class="wm" style="left:793px;top:64.80000000000001px">江言 2025-09-04 16:43</div>
<div class="wm" style="left:73px;top:244.8px">江言 2025-09-04 16:43</div>
<div class="wm" style="left:433px;top:244.8px">江言 2025-09-04 16:43</div>
<div class="wm" style="left:793px;top:244.8px">江言 2025-09-04 16:43</div>
<div class="wm" style="left:73px;top:424.79999999999995px">江言 2025-09-04 16:43</div>
<div class="wm" style="left:433px;top:424.79999999999995px">江言 2025-09-04 16:43</div>
<div class="wm" style="left:793px;top:424.79999999999995px">江言 2025-09-04 16:43</div>
<div class="wm" style="left:73px;top:604.8px">江言 2025-09-04 16:43</div>
<div class="wm" style="left:433px;top:604.8px">江言 2025-09-04 16:43</div>
<div class="wm" style="left:793px;top:604.8px">江言 2025-09-04 16:43</div>
<div class="wm" style="left:73px;top:784.8px">江言 2025-09-04 16:43</div>
<div class="wm" style="left:433px;top:784.8px">江言 2025-09-04 16:43</div>
<div class="wm" style="left:793px;top:784.8px">江言 2025-09-04 16:43</div>
</div>
</div>
<div class="abs" style="left:1279px;top:0;width:1px;height:868px;background:#c4d7f7"></div>
<div id="dt">
<div class="abs" style="left:0;top:0;width:555px;height:25.5px;background:#eef2fb"></div>
<div class="hl" style="top:25px"></div>
<svg style="left:10.299999999999955px;top:2.3px" width="16" height="16" viewBox="0 0 16 16" fill="none" stroke="#474747" stroke-width="1.6"><path d="M15 1 H1 V15 H5.5" stroke-dasharray="1.9 1.6"/><path d="M7.6 7.6 L15 15.4 M7.6 14 V7.6 H14" stroke-width="1.9"/></svg>
<svg style="left:39px;top:3px" width="18" height="14" viewBox="0 0 18 14" fill="none" stroke="#474747" stroke-width="1.9"><path d="M3.6 11 V1.4 H16.4 M0.3 12.4 H9.2"/><rect x="11.6" y="4.9" width="5" height="8" rx="0.6"/></svg>
<div class="sep" style="left:68px;top:3px;height:16px"></div>
<div class="t" style="left:82.40000000000009px;top:3.5px;color:#474747">元素</div>
<div class="t" style="left:132px;top:3.5px;color:#474747">控制台</div>
<div class="t" style="left:194px;top:3.5px;color:#474747">源代码/来源</div>
<div class="t" style="left:289.5px;top:3.5px;color:#0b57d0">网络</div>
<div class="t" style="left:339px;top:3.5px;color:#474747">性能</div>
<div class="t" style="left:388.5px;top:3.5px;color:#474747">内存</div>
<div class="abs" style="left:278px;top:21.5px;width:49.5px;height:4px;background:#0b57d0;border-radius:3px 3px 0 0"></div>
<svg style="left:431.29999999999995px;top:4.6px" width="13" height="11" viewBox="0 0 13 11" fill="none" stroke="#474747" stroke-width="1.6"><path d="M1 0.8 L5.6 5.5 L1 10.2 M7.2 0.8 L11.8 5.5 L7.2 10.2"/></svg>
<svg style="left:474.20000000000005px;top:2.8px" width="14" height="14" viewBox="0 0 14 14"><circle cx="7" cy="7" r="6.8" fill="#dc362e"/><path d="M4.3 4.3 L9.7 9.7 M9.7 4.3 L4.3 9.7" stroke="#fff" stroke-width="1.3"/></svg>
<div class="t" style="left:490px;top:1.6px;color:#474747;font-size:13.5px">8</div>
<svg style="left:506.20000000000005px;top:4.2px" width="12" height="11.5" viewBox="0 0 12 11.5"><path d="M0.5 0.3 H11.7 V8.2 H3 L0.5 11 Z" fill="#dc362e"/><path d="M4.4 2.4 L7.8 5.8 M7.8 2.4 L4.4 5.8" stroke="#fff" stroke-width="1.1"/></svg>
<div class="t" style="left:520.7px;top:1.6px;color:#474747;font-size:13.5px">8</div>
<div class="sep" style="left:538px;top:2.5px;height:16.5px"></div>
<svg style="left:550.5px;top:2.5px" width="15" height="15" viewBox="0 0 15 15" fill="none" stroke="#474747" stroke-width="1.8"><circle cx="7.5" cy="7.5" r="5.6" stroke-dasharray="3.2 1.5"/><circle cx="7.5" cy="7.5" r="2"/></svg>
<div class="hl" style="top:54.5px"></div>
<svg style="left:10px;top:32px" width="16" height="16" viewBox="0 0 16 16"><circle cx="8" cy="8" r="7.2" fill="none" stroke="#dc362e" stroke-width="1.5"/><rect x="4.8" y="4.8" width="6.4" height="6.4" rx="1" fill="#dc362e"/></svg>
<svg style="left:39.59999999999991px;top:31.6px" width="17" height="17" viewBox="0 0 17 17" fill="none" stroke="#474747" stroke-width="1.6"><circle cx="8.5" cy="8.5" r="7.3"/><path d="M13.5 3.5 L3.5 13.5"/></svg>
<div class="sep" style="left:68px;top:32px;height:16px"></div>
<svg style="left:82.29999999999995px;top:33.2px" width="16" height="16" viewBox="0 0 16 16"><path d="M0.2 0.3 H12.8 L8 6.6 V13 H5 V6.6 Z" fill="#1b6ef3"/><circle cx="13.2" cy="12.8" r="2.4" fill="#1b6ef3"/></svg>
<svg style="left:112px;top:32.6px" width="16" height="16" viewBox="0 0 16 16" fill="none" stroke="#474747" stroke-width="1.8"><circle cx="5.9" cy="5.9" r="4.7"/><path d="M9.3 9.3 L15 15"/></svg>
<div class="sep" style="left:140px;top:32px;height:16px"></div>
<div class="ck" style="left:151.5999999999999px;top:34.3px"></div>
<div class="t" style="left:171.79999999999995px;top:32.6px">保留日志</div>
<div class="sep" style="left:234px;top:32px;height:16px"></div>
<div class="ck" style="left:245.4000000000001px;top:34.3px"></div>
<div class="t" style="left:265.79999999999995px;top:32.6px">停用缓存</div>
<div class="t" style="left:334px;top:32.6px">已停用节流模式</div>
<svg style="left:448.5999999999999px;top:37.5px" width="9" height="5" viewBox="0 0 9 5"><path d="M0 0 H9 L4.5 4.6 Z" fill="#474747"/></svg>
<svg style="left:471.29999999999995px;top:31.2px" width="18" height="17" viewBox="0 0 18 17" fill="none" stroke="#474747" stroke-width="1.7"><path d="M0.8 5.4 Q9 -2.2 17 5.4 M4 9 Q8.6 4.6 12.6 7.6"/><path d="M6.4 10.8 L8.6 13 L8.8 10.6 Z" fill="#474747" stroke="none"/><circle cx="13.6" cy="12.4" r="2" stroke-width="1.5"/><path d="M13.6 8.6 V10 M13.6 14.8 V16.2 M9.8 12.4 H11.2 M16 12.4 H17.4 M10.9 9.7 L11.9 10.7 M15.3 14.1 L16.3 15.1 M16.3 9.7 L15.3 10.7 M11.9 14.1 L10.9 15.1" stroke-width="1.4"/></svg>
<div class="sep" style="left:499px;top:32px;height:17px"></div>
<svg style="left:513px;top:32px" width="14" height="15" viewBox="0 0 14 15" fill="none" stroke="#474747" stroke-width="1.7"><path d="M7 10.4 V1.4 M3.2 5 L7 1.2 L10.8 5 M1 10.2 V13.4 Q1 14 1.6 14 H12.4 Q13 14 13 13.4 V10.2"/></svg>
<svg style="left:544.5px;top:32px" width="14" height="15" viewBox="0 0 14 15" fill="none" stroke="#474747" stroke-width="1.7"><path d="M7 0.6 V10 M3.2 6.4 L7 10.2 L10.8 6.4 M1 10.2 V13.4 Q1 14 1.6 14 H12.4 Q13 14 13 13.4 V10.2"/></svg>
<div class="abs" style="left:5px;top:59px;width:432.5px;height:22px;border-radius:11px;background:#edf2fa"></div>
<svg style="left:17.40000000000009px;top:64.5px" width="11" height="11" viewBox="0 0 11 11" fill="none" stroke="#474747" stroke-width="1.5"><path d="M0.8 0.8 H10.2 L6.3 5.6 V10.4 H4.7 V5.6 Z"/></svg>
<div class="t" style="left:36px;top:62px;color:#474747">过滤</div>
<div class="ck" style="left:451px;top:63.3px"></div>
<div class="t" style="left:471px;top:62px">反转</div>
<div class="sep" style="left:509.5px;top:61.5px;height:17px;width:1.5px"></div>
<div class="t" style="left:530.3px;top:62px">更多</div>
<div class="pill" style="left:4.4px;width:37.2px;">全部</div>
<div class="pill" style="left:52.0px;width:73.4px;background:#d3e3fd;border-color:#d3e3fd;">Fetch/XHR</div>
<div class="pill" style="left:131.0px;width:36.0px;">文档</div>
<div class="pill" style="left:172.0px;width:35.0px;">CSS</div>
<div class="pill" style="left:211.6px;width:24.4px;">JS</div>
<div class="pill" style="left:240.6px;width:37.2px;">字体</div>
<div class="pill" style="left:283.3px;width:36.1px;">图片</div>
<div class="pill" style="left:325.3px;width:36.4px;">媒体</div>
<div class="pill" style="left:367.4px;width:36.2px;">清单</div>
<div class="pill" style="left:408.4px;width:49.2px;">套接字</div>
<div class="pill" style="left:462.4px;width:47.9px;">Wasm</div>
<div class="pill" style="left:515.3px;width:36.7px;">其他</div>
<div class="sep" style="left:46px;top:88.5px;height:17px"></div>
<div class="hl" style="top:110.5px"></div>
<div class="gl" style="left:99.2px"></div>
<div class="ms" style="left:37.0px">100 ms</div>
<div class="gl" style="left:198.1px"></div>
<div class="ms" style="left:135.9px">200 ms</div>
<div class="gl" style="left:297.0px"></div>
<div class="ms" style="left:234.8px">300 ms</div>
<div class="gl" style="left:395.9px"></div>
<div class="ms" style="left:333.7px">400 ms</div>
<div class="gl" style="left:494.8px"></div>
<div class="ms" style="left:432.6px">500 ms</div>
<div class="abs" style="left:0;top:138px;width:555px;height:10.6px;background:#d3e3fd"></div>
<div class="abs" style="left:1.6px;top:140px;width:169.0px;height:5.6px;background:#00657a"></div>
<div class="abs" style="left:170.6px;top:140px;width:255.4px;height:5.6px;background:#a8a8a8"></div>
<div class="abs" style="left:426.0px;top:140px;width:21.0px;height:5.6px;background:#e8ab10"></div>
<div class="abs" style="left:447.0px;top:140px;width:20.0px;height:5.6px;background:#d496f2"></div>
<div class="abs" style="left:467.0px;top:140px;width:88.0px;height:5.6px;background:#34b45a"></div>
<div class="abs" style="left:1px;top:131px;width:1.5px;height:69px;background:#a8c7fa"></div>
<div class="abs" style="left:0;top:112px;width:6px;height:19px;background:#d3e3fd;border:1px solid #a8c7fa;border-left:0;border-radius:0 3px 3px 0"></div>
<div class="abs" style="left:1.5px;top:117.5px;width:1.5px;height:8px;background:#0b57d0"></div>
<div class="hl" style="top:199.5px"></div>
<div class="abs" style="left:0;top:200.5px;width:192px;height:29px;background:#f7f9fd"></div>
<div class="t" style="left:5.599999999999909px;top:206.5px">名称</div>
<div class="abs" style="left:192px;top:200.5px;width:363px;height:29px;background:#eef2fb"></div>
<div class="hl" style="top:229.6px"></div>
<div class="abs" style="left:0;top:230.4px;width:192px;height:23px;background:#d3e3fd"></div>
<svg style="left:5.599999999999909px;top:236px" width="15" height="12" viewBox="0 0 15 12" fill="none" stroke="#e8710a" stroke-width="1.4"><path d="M4 0.8 Q2.4 0.8 2.4 2.4 V4.4 Q2.4 6 0.8 6 Q2.4 6 2.4 7.6 V9.6 Q2.4 11.2 4 11.2 M11 0.8 Q12.6 0.8 12.6 2.4 V4.4 Q12.6 6 14.2 6 Q12.6 6 12.6 7.6 V9.6 Q12.6 11.2 11 11.2"/><circle cx="7.5" cy="4" r="0.9" fill="#e8710a" stroke="none"/><path d="M7.5 7 V8.2 L6.6 9.6" stroke-width="1.3"/></svg>
<div class="t" style="left:25.40000000000009px;top:233.5px;font-size:13.2px">queryCarPayFeePage</div>
<div class="abs" style="left:191.5px;top:200.5px;width:1px;height:668px;background:#d3e3fd"></div>
<svg style="left:209.5px;top:210.5px" width="11" height="11" viewBox="0 0 11 11" fill="none" stroke="#474747" stroke-width="1.5"><path d="M0.7 0.7 L10.3 10.3 M10.3 0.7 L0.7 10.3"/></svg>
<div class="t" style="left:243.4000000000001px;top:208px;color:#474747">标头</div>
<div class="t" style="left:292.4000000000001px;top:208px;color:#474747">载荷</div>
<div class="t" style="left:342px;top:208px;color:#474747">预览</div>
<div class="t" style="left:391.20000000000005px;top:208px;color:#0b57d0">响应</div>
<div class="t" style="left:440.5px;top:208px;color:#474747">启动器</div>
<div class="t" style="left:503.5px;top:208px;color:#474747">时间</div>
<div class="abs" style="left:381px;top:225.5px;width:49.5px;height:4px;background:#0b57d0;border-radius:3px 3px 0 0"></div>
<div class="ln" style="top:236.3px">1</div>
<div class="code" style="top:236.5px">{</div>
<div class="ln" style="top:253.9px">–</div>
<div class="code" style="top:254.9px">    <b>"code"</b>: <i>0</i>,</div>
<div class="ln" style="top:272.4px">–</div>
<div class="code" style="top:273.4px">    <b>"msg"</b>: <b>"<s>操作成功</s>"</b>,</div>
<div class="ln" style="top:290.8px">–</div>
<div class="code" style="top:291.8px">    <b>"ok"</b>: <u>true</u>,</div>
<div class="ln" style="top:309.3px">–</div>
<div class="code" style="top:310.3px">    <b>"data"</b>: {</div>
<div class="ln" style="top:327.8px">–</div>
<div class="code" style="top:328.8px">        <b>"pageNum"</b>: <i>1</i>,</div>
<div class="ln" style="top:346.2px">–</div>
<div class="code" style="top:347.2px">        <b>"pageSize"</b>: <i>10</i>,</div>
<div class="ln" style="top:364.7px">–</div>
<div class="code" style="top:365.7px">        <b>"total"</b>: <i>25</i>,</div>
<div class="ln" style="top:383.1px">–</div>
<div class="code" style="top:384.1px">        <b>"pages"</b>: <i>3</i>,</div>
<div class="ln" style="top:401.6px">–</div>
<div class="code" style="top:402.6px">        <b>"list"</b>: [</div>
<div class="ln" style="top:420.0px">–</div>
<div class="code" style="top:421.0px">            {</div>
<div class="ln" style="top:438.4px">–</div>
<div class="code" style="top:439.4px">                <b>"carId"</b>: <i>376</i>,</div>
<div class="ln" style="top:456.9px">–</div>
<div class="code" style="top:457.9px">                <b>"userId"</b>: <i>17614</i>,</div>
<div class="ln" style="top:475.3px">–</div>
<div class="code" style="top:476.3px">                <b>"userType"</b>: <i>1</i>,</div>
<div class="ln" style="top:493.8px">–</div>
<div class="code" style="top:494.8px">                <b>"plateNumber"</b>: <b>"<s>粤</s>W456890"</b>,</div>
<div class="ln" style="top:512.2px">–</div>
<div class="code" style="top:513.2px">                <b>"contactPerson"</b>: <b>"<s>兰江艳</s>"</b>,</div>
<div class="ln" style="top:530.7px">–</div>
<div class="code" style="top:531.7px">                <b>"contactPhone"</b>: <b>"18878383585"</b>,</div>
<div class="ln" style="top:549.2px">–</div>
<div class="code" style="top:550.2px">                <b>"type"</b>: <b>"1"</b>,</div>
<div class="ln" style="top:567.6px">–</div>
<div class="code" style="top:568.6px">                <b>"usageStatus"</b>: <i>1</i>,</div>
<div class="ln" style="top:586.1px">–</div>
<div class="code" style="top:587.1px">                <b>"createTime"</b>: <b>"2025-09-04 15:32:27"</b></div>
<div class="ln" style="top:604.5px">–</div>
<div class="code" style="top:605.5px">            },</div>
<div class="ln" style="top:623.0px">–</div>
<div class="code" style="top:624.0px">            {</div>
<div class="ln" style="top:641.4px">–</div>
<div class="code" style="top:642.4px">                <b>"carId"</b>: <i>375</i>,</div>
<div class="ln" style="top:659.9px">–</div>
<div class="code" style="top:660.9px">                <b>"userId"</b>: <i>17614</i>,</div>
<div class="ln" style="top:678.3px">–</div>
<div class="code" style="top:679.3px">                <b>"userType"</b>: <i>1</i>,</div>
<div class="ln" style="top:696.8px">–</div>
<div class="code" style="top:697.8px">                <b>"plateNumber"</b>: <b>"<s>皖</s>3456789"</b>,</div>
<div class="ln" style="top:715.2px">–</div>
<div class="code" style="top:716.2px">                <b>"contactPerson"</b>: <b>"<s>兰江艳</s>"</b>,</div>
<div class="ln" style="top:733.7px">–</div>
<div class="code" style="top:734.7px">                <b>"contactPhone"</b>: <b>"18878383585"</b>,</div>
<div class="ln" style="top:752.1px">–</div>
<div class="code" style="top:753.1px">                <b>"type"</b>: <b>"1"</b>,</div>
<div class="ln" style="top:770.5px">–</div>
<div class="code" style="top:771.5px">                <b>"usageStatus"</b>: <i>1</i>,</div>
<div class="ln" style="top:789.0px">–</div>
<div class="code" style="top:790.0px">                <b>"validUntil"</b>: <b>"2025-09-30"</b>,</div>
<div class="ln" style="top:807.5px">–</div>
<div class="code" style="top:808.5px">                <b>"createTime"</b>: <b>"2025-09-04 14:51:33"</b></div>
<div class="ln" style="top:825.9px">–</div>
<div class="code" style="top:826.9px">            },</div>
<div class="ln" style="top:844.4px">–</div>
<div class="code" style="top:845.4px">            {</div>
<div class="ln" style="top:862.8px">–</div>
<div class="code" style="top:863.8px">                <b>"carId"</b>: <i>374</i>,</div>
<div class="ig" style="left:256px;top:253.4px;height:700px"></div>
<div class="ig" style="left:284px;top:327.2px;height:700px;background:#c9dcfb"></div>
<div class="ig" style="left:312px;top:419.5px;height:700px;background:#c9dcfb"></div>
<div class="ig" style="left:340px;top:437.9px;height:166.2px;background:#c9dcfb"></div>
<div class="ig" style="left:340px;top:640.9px;height:184.6px;background:#c9dcfb"></div>
<div class="ig" style="left:340px;top:862.3px;height:55.5px;background:#c9dcfb"></div>
<div class="t" style="left:351.5px;top:811px;font-size:20px;letter-spacing:.55px;line-height:26px;color:rgba(110,110,110,.62)">激活 Windows</div>
<div class="t" style="left:351.5px;top:838.5px;font-size:15.2px;letter-spacing:.5px;line-height:20px;color:rgba(110,110,110,.62)">转到“设置”以激活 Windows。</div>
</div>
<div class="abs" style="left:827.7px;top:251.3px;width:179.6px;height:116.9px;border:3px solid #ff0000;border-radius:22.5px"></div>
<div class="t" style="left:860.6px;top:482.5px;font-size:44.6px;letter-spacing:-1.9px;line-height:56px;font-weight:700;color:#fe1607;text-shadow:3px 0px 1px #fff,-3px 0px 1px #fff,0px 3px 1px #fff,0px -3px 1px #fff,2.2px 2.2px 1px #fff,-2.2px 2.2px 1px #fff,2.2px -2.2px 1px #fff,-2.2px -2.2px 1px #fff,4px 0px 1px #fff,-4px 0px 1px #fff,0px 4px 1px #fff,0px -4px 1px #fff,3px 3px 1px #fff,-3px 3px 1px #fff,3px -3px 1px #fff,-3px -3px 1px #fff,1.5px 3.6px 1px #fff,-1.5px 3.6px 1px #fff,1.5px -3.6px 1px #fff,-1.5px -3.6px 1px #fff,3.6px 1.5px 1px #fff,-3.6px 1.5px 1px #fff,3.6px -1.5px 1px #fff,-3.6px -1.5px 1px #fff">临时车申请审核通过，变成月卡车之后</div>
<div class="t" style="left:860.6px;top:539.3px;font-size:44.6px;letter-spacing:-1.9px;line-height:56px;font-weight:700;color:#fe1607;text-shadow:3px 0px 1px #fff,-3px 0px 1px #fff,0px 3px 1px #fff,0px -3px 1px #fff,2.2px 2.2px 1px #fff,-2.2px 2.2px 1px #fff,2.2px -2.2px 1px #fff,-2.2px -2.2px 1px #fff,4px 0px 1px #fff,-4px 0px 1px #fff,0px 4px 1px #fff,0px -4px 1px #fff,3px 3px 1px #fff,-3px 3px 1px #fff,3px -3px 1px #fff,-3px -3px 1px #fff,1.5px 3.6px 1px #fff,-1.5px 3.6px 1px #fff,1.5px -3.6px 1px #fff,-1.5px -3.6px 1px #fff,3.6px 1.5px 1px #fff,-3.6px 1.5px 1px #fff,3.6px -1.5px 1px #fff,-3.6px -1.5px 1px #fff">有效期为空！</div>
</body></html>
